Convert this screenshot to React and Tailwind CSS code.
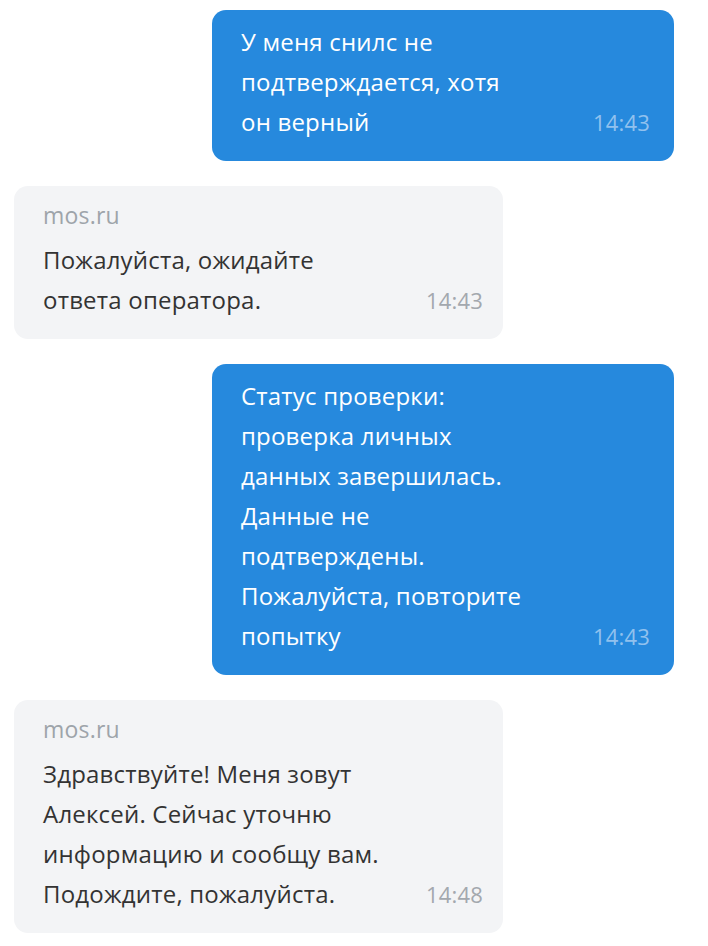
const font = { fontFamily: '"Open Sans", "Noto Sans", sans-serif' };

function Lines({ lines, time, timeClass }) {
  return (
    <div>
      {lines.map((l, i) =>
        i === lines.length - 1 ? (
          <div key={i} className="flex items-baseline justify-between h-[40px] leading-[40px]">
            <span>{l}</span>
            <span className={`text-[22px] ${timeClass}`}>{time}</span>
          </div>
        ) : (
          <div key={i} className="h-[40px] leading-[40px] whitespace-nowrap">{l}</div>
        )
      )}
    </div>
  );
}

function Out({ lines, time }) {
  return (
    <div className="ml-auto mr-[34px] w-[462px] rounded-[14px] bg-[#2689dd] pl-[29px] pr-[24px] pt-[12px] pb-[19px] text-[24px] text-white">
      <Lines lines={lines} time={time} timeClass="text-[#91c1ee]" />
    </div>
  );
}

function In({ lines, time }) {
  return (
    <div className="ml-[14px] w-[489px] rounded-[14px] bg-[#f3f4f6] pl-[29px] pr-[20px] pt-[9px] pb-[19px] text-[24px] text-[#333333]">
      <div className="h-[40px] leading-[40px] mb-[5px] text-[23px] text-[#9ea4aa]">mos.ru</div>
      <Lines lines={lines} time={time} timeClass="text-[#a3a8ae]" />
    </div>
  );
}

export default function App() {
  return (
    <div className="min-h-[946px] bg-white pt-[10px] flex flex-col gap-[25px] tracking-[0.2px]" style={font}>
      <Out lines={['У меня снилс не', 'подтверждается, хотя', 'он верный']} time="14:43" />
      <In lines={['Пожалуйста, ожидайте', 'ответа оператора.']} time="14:43" />
      <Out
        lines={['Статус проверки:', 'проверка личных', 'данных завершилась.', 'Данные не', 'подтверждены.', 'Пожалуйста, повторите', 'попытку']}
        time="14:43"
      />
      <In
        lines={['Здравствуйте! Меня зовут', 'Алексей. Сейчас уточню', 'информацию и сообщу вам.', 'Подождите, пожалуйста.']}
        time="14:48"
      />
    </div>
  );
}
